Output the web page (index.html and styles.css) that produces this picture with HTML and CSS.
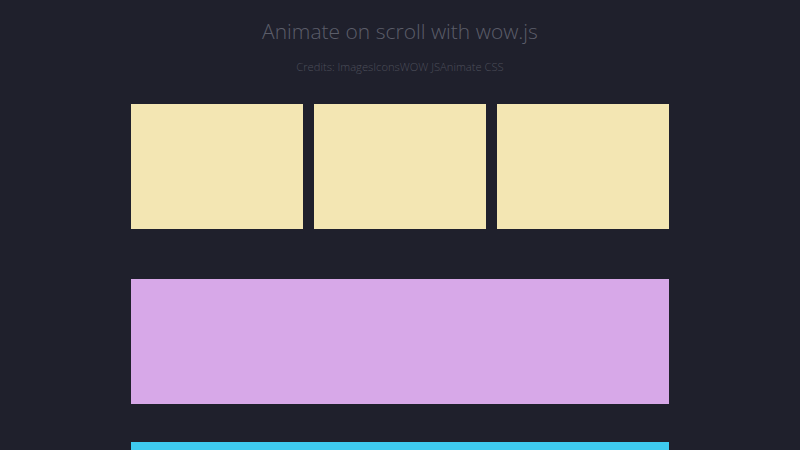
FILE: index.html
```html
<!DOCTYPE html>
<html>
<head>
<meta charset="utf-8">
<link rel="stylesheet" href="styles.css">
</head>
<body>
<header class="head">
  <h1 class="title">Animate on scroll with wow.js</h1>
  <p class="credits">Credits: <span>Images</span><span>Icons</span><span>WOW JS</span><span>Animate CSS</span></p>
</header>
<main class="wrap">
  <div class="row">
    <div class="box yellow"></div>
    <div class="box yellow"></div>
    <div class="box yellow"></div>
  </div>
  <div class="box purple wide"></div>
  <div class="box cyan wide"></div>
</main>
</body>
</html>
```
FILE: styles.css
```css
html, body {
  margin: 0;
  padding: 0;
  background: #1f202c;
  font-family: "Open Sans", "Liberation Sans", sans-serif;
  overflow: hidden;
}
.head {
  text-align: center;
  padding-top: 16px;
}
.title {
  margin: 0;
  font-size: 21px;
  font-weight: 300;
  line-height: 30px;
  color: #5b5d69;
}
.credits {
  margin: 13px 0 0;
  font-size: 11.2px;
  font-weight: 300;
  line-height: 16px;
  color: #4c4e5a;
}
.wrap {
  width: 538px;
  margin: 29px auto 0;
}
.row {
  display: grid;
  grid-template-columns: repeat(3, 1fr);
  gap: 11px;
}
.box {
  height: 125px;
}
.yellow { background: #f3e6b3; }
.purple { background: #d7a8e8; margin-top: 50px; }
.cyan { background: #3ecbf0; margin-top: 38px; }
```
